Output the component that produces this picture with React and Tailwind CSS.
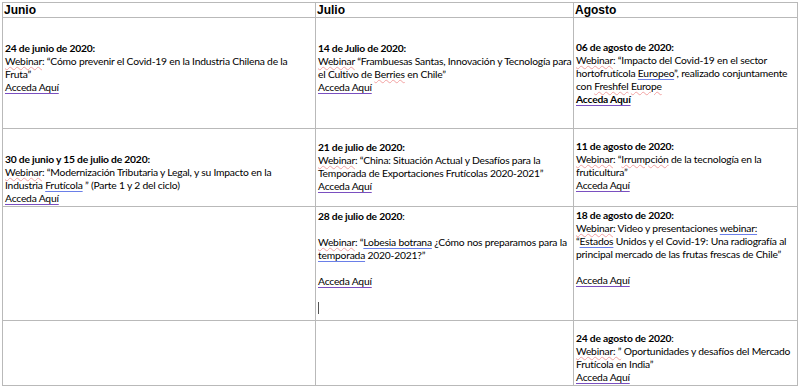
const body = { fontFamily: "Lato, 'Liberation Sans', sans-serif" };

function Sp({ children }) {
  return (
    <span className="underline decoration-wavy decoration-[#f2a2a2] decoration-[1px] underline-offset-[1px]">
      {children}
    </span>
  );
}

function Gr({ children }) {
  return (
    <span className="underline decoration-[#6a7fe8] decoration-[1px] underline-offset-[2px]">
      {children}
    </span>
  );
}

function Link({ bold }) {
  return (
    <span
      className={`underline decoration-[#7a4fc0] underline-offset-[2px] ${bold ? "font-bold" : ""}`}
    >
      Acceda Aquí
    </span>
  );
}

function Cell({ pt = 0, children }) {
  return (
    <div
      className="border-r border-b border-[#b9b9b9] pl-[2px] text-[10.3px] tracking-[-0.2px] leading-[13px] text-black whitespace-nowrap overflow-hidden"
      style={{ ...body, paddingTop: pt }}
    >
      {children}
    </div>
  );
}

function Head({ children }) {
  return (
    <div
      className="border-r border-b border-[#b9b9b9] pl-[1px] text-[12px] leading-[14px] font-bold text-black"
      style={{ fontFamily: "'Liberation Sans', Arial, sans-serif" }}
    >
      {children}
    </div>
  );
}

const Line = ({ children }) => <div className="h-[13px]">{children}</div>;

export default function App() {
  return (
    <div className="w-[800px] h-[388px] bg-white pt-[2px] pl-[2px] overflow-hidden">
      <div className="grid grid-cols-[313px_258px_224px] grid-rows-[15px_111px_78px_114px_65px] border-l border-t border-[#b9b9b9] w-max">
        <Head>Junio</Head>
        <Head>Julio</Head>
        <Head>Agosto</Head>

        <Cell pt={24}>
          <Line><b>24 de junio de 2020:</b></Line>
          <Line><Sp>Webinar</Sp>: “Cómo prevenir el Covid-19 en la Industria Chilena de la</Line>
          <Line>Fruta”</Line>
          <Line><Link /></Line>
        </Cell>
        <Cell pt={24}>
          <Line><b>14 de Julio de 2020:</b></Line>
          <Line><Sp>Webinar</Sp> “Frambuesas Santas, Innovación y Tecnología para</Line>
          <Line>el Cultivo de <Sp>Berries</Sp> en Chile”</Line>
          <Line><Link /></Line>
        </Cell>
        <Cell pt={23}>
          <Line><b>06 de agosto de 2020:</b></Line>
          <Line><Sp>Webinar</Sp>: “Impacto del Covid-19 en el sector</Line>
          <Line>hortofrutícola <Gr>Europeo</Gr>”, realizado conjuntamente</Line>
          <Line>con <Sp>Freshfel</Sp> <Sp>Europe</Sp></Line>
          <Line><Link bold /></Line>
        </Cell>

        <Cell pt={24}>
          <Line><b>30 de junio y 15 de julio de 2020:</b></Line>
          <Line><Sp>Webinar</Sp>: “Modernización Tributaria y Legal, y su Impacto en la</Line>
          <Line>Industria <Gr>Frutícola</Gr> ” (Parte 1 y 2 del ciclo)</Line>
          <Line><Link /></Line>
        </Cell>
        <Cell pt={12}>
          <Line><b>21 de julio de 2020:</b></Line>
          <Line><Sp>Webinar</Sp>: “China: Situación Actual y Desafíos para la</Line>
          <Line>Temporada de Exportaciones Frutícolas 2020-2021”</Line>
          <Line><Link /></Line>
        </Cell>
        <Cell pt={11}>
          <Line><b>11 de agosto de 2020:</b></Line>
          <Line><Sp>Webinar</Sp>: “<Sp>Irrumpción</Sp> de la tecnología en la</Line>
          <Line>fruticultura”</Line>
          <Line><Link /></Line>
        </Cell>

        <Cell pt={3} />
        <Cell pt={3}>
          <Line><b>28 de julio de 2020</b>:</Line>
          <Line />
          <Line><Sp>Webinar</Sp>: “<Gr>Lobesia botrana</Gr> ¿Cómo nos preparamos para la</Line>
          <Line><Gr>temporada</Gr> 2020-2021?”</Line>
          <Line />
          <Line><Link /></Line>
          <Line />
          <Line><span className="inline-block w-px h-[12px] bg-[#555] mt-[1px]" /></Line>
        </Cell>
        <Cell pt={2}>
          <Line><b>18 de agosto de 2020:</b></Line>
          <Line><Sp>Webinar</Sp>: Video y presentaciones <Gr>webinar:</Gr></Line>
          <Line>“<Gr>Estados</Gr> Unidos y el Covid-19: Una radiografía al</Line>
          <Line>principal mercado de las frutas frescas de Chile”</Line>
          <Line />
          <Line><Link /></Line>
        </Cell>

        <Cell pt={0} />
        <Cell pt={0} />
        <Cell pt={11}>
          <Line><b>24 de agosto de 2020</b>:</Line>
          <Line><Sp>Webinar: ”</Sp> Oportunidades y desafíos del Mercado</Line>
          <Line>Frutícola en India”</Line>
          <Line><Link /></Line>
        </Cell>
      </div>
    </div>
  );
}
